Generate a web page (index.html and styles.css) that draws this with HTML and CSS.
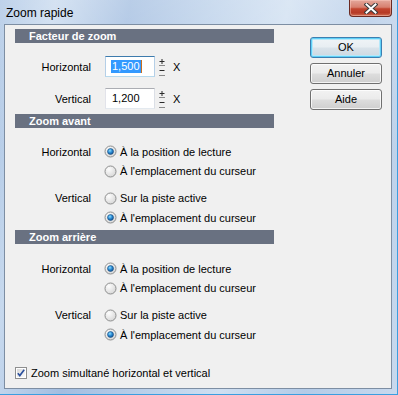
FILE: index.html
```
<!DOCTYPE html>
<html>
<head>
<meta charset="utf-8">
<link rel="stylesheet" href="styles.css">
</head>
<body>
<div class="window">
  <div class="titlebar">
    <span class="title">Zoom rapide</span>
    <div class="close">
      <svg width="14" height="11" viewBox="0 0 14 11">
        <path d="M2.5 1.5 L11.5 9.5 M11.5 1.5 L2.5 9.5" stroke="#3a3a3a" stroke-width="4" stroke-linecap="square"/>
        <path d="M2.5 1.5 L11.5 9.5 M11.5 1.5 L2.5 9.5" stroke="#ffffff" stroke-width="2" stroke-linecap="square"/>
      </svg>
    </div>
  </div>
  <div class="client">
    <div class="main">
      <div class="left">
        <div class="bar">Facteur de zoom</div>
        <div class="factor">
          <div class="lbl">Horizontal</div>
          <div class="ctrl">
            <div class="input focus"><span class="sel">1,500</span><span class="caret"></span></div>
            <svg class="spin" width="8" height="21" viewBox="0 0 8 21">
              <path d="M1.5 5.5 H6.5 M4 3 V8" stroke="#2a2a2a" stroke-width="1"/>
              <path d="M1 9.5 H7" stroke="#8a8a8a" stroke-width="1"/>
              <path d="M1.5 14.5 H6.5" stroke="#2a2a2a" stroke-width="1"/>
              <path d="M1 19.5 H7" stroke="#8a8a8a" stroke-width="1"/>
            </svg>
            <span class="x">X</span>
          </div>
          <div class="lbl">Vertical</div>
          <div class="ctrl">
            <div class="input"><span class="val">1,200</span></div>
            <svg class="spin" width="8" height="21" viewBox="0 0 8 21">
              <path d="M1.5 5.5 H6.5 M4 3 V8" stroke="#2a2a2a" stroke-width="1"/>
              <path d="M1 9.5 H7" stroke="#8a8a8a" stroke-width="1"/>
              <path d="M1.5 14.5 H6.5" stroke="#2a2a2a" stroke-width="1"/>
              <path d="M1 19.5 H7" stroke="#8a8a8a" stroke-width="1"/>
            </svg>
            <span class="x">X</span>
          </div>
        </div>

        <div class="bar">Zoom avant</div>
        <div class="radios first">
          <div class="group">
            <div class="lbl">Horizontal</div>
            <div class="opt"><svg class="radio" width="13" height="13" viewBox="0 0 13 13"><use href="#r-on"/></svg><span>À la position de lecture</span></div>
            <div class="opt col2"><svg class="radio" width="13" height="13" viewBox="0 0 13 13"><use href="#r-off"/></svg><span>À l'emplacement du curseur</span></div>
          </div>
          <div class="group">
            <div class="lbl">Vertical</div>
            <div class="opt"><svg class="radio" width="13" height="13" viewBox="0 0 13 13"><use href="#r-off"/></svg><span>Sur la piste active</span></div>
            <div class="opt col2"><svg class="radio" width="13" height="13" viewBox="0 0 13 13"><use href="#r-on"/></svg><span>À l'emplacement du curseur</span></div>
          </div>
        </div>

        <div class="bar">Zoom arrière</div>
        <div class="radios second">
          <div class="group">
            <div class="lbl">Horizontal</div>
            <div class="opt"><svg class="radio" width="13" height="13" viewBox="0 0 13 13"><use href="#r-on"/></svg><span>À la position de lecture</span></div>
            <div class="opt col2"><svg class="radio" width="13" height="13" viewBox="0 0 13 13"><use href="#r-off"/></svg><span>À l'emplacement du curseur</span></div>
          </div>
          <div class="group">
            <div class="lbl">Vertical</div>
            <div class="opt"><svg class="radio" width="13" height="13" viewBox="0 0 13 13"><use href="#r-off"/></svg><span>Sur la piste active</span></div>
            <div class="opt col2"><svg class="radio" width="13" height="13" viewBox="0 0 13 13"><use href="#r-on"/></svg><span>À l'emplacement du curseur</span></div>
          </div>
        </div>
      </div>
      <div class="buttons">
        <div class="btn default">OK</div>
        <div class="btn">Annuler</div>
        <div class="btn">Aide</div>
      </div>
    </div>
    <div class="check">
      <svg width="12" height="12" viewBox="0 0 12 12">
        <defs>
          <linearGradient id="cbg" x1="0" y1="0" x2="1" y2="1">
            <stop offset="0" stop-color="#d8d8d8"/>
            <stop offset="1" stop-color="#fbfbfb"/>
          </linearGradient>
        </defs>
        <rect x="0.5" y="0.5" width="11" height="11" fill="#ffffff" stroke="#8e8f8f"/>
        <rect x="2" y="2" width="8" height="8" fill="url(#cbg)"/>
        <path d="M2.8 6.2 L4.8 8.6 L9.2 2.8" fill="none" stroke="#2a4f9c" stroke-width="1.6"/>
      </svg>
      <span>Zoom simultané horizontal et vertical</span>
    </div>
  </div>
</div>

<svg width="0" height="0" class="defs">
  <defs>
    <radialGradient id="rbg" cx="0.35" cy="0.3" r="0.8">
      <stop offset="0" stop-color="#fdfdfd"/>
      <stop offset="1" stop-color="#d4d4d4"/>
    </radialGradient>
    <radialGradient id="rdot" cx="0.4" cy="0.35" r="0.7">
      <stop offset="0" stop-color="#8fe0ff"/>
      <stop offset="0.5" stop-color="#2a8ad4"/>
      <stop offset="1" stop-color="#0c4a8a"/>
    </radialGradient>
    <g id="r-off">
      <circle cx="6.5" cy="6.5" r="5.5" fill="url(#rbg)" stroke="#8e8f8f"/>
    </g>
    <g id="r-on">
      <circle cx="6.5" cy="6.5" r="5.5" fill="url(#rbg)" stroke="#8e8f8f"/>
      <circle cx="6.5" cy="6.5" r="3" fill="url(#rdot)" stroke="#1b4f7f" stroke-width="0.6"/>
    </g>
  </defs>
</svg>
</body>
</html>
```
FILE: styles.css
```
html, body {
  margin: 0;
  padding: 0;
}
body {
  width: 398px;
  height: 395px;
  overflow: hidden;
  font-family: "Liberation Sans", Arial, sans-serif;
  font-size: 11px;
  color: #000;
}
.defs {
  position: absolute;
  width: 0;
  height: 0;
}
.window {
  width: 398px;
  height: 395px;
  box-sizing: border-box;
  display: flex;
  flex-direction: column;
  background:
    linear-gradient(180deg, rgba(255,255,255,0.25) 0%, rgba(255,255,255,0) 40%),
    linear-gradient(100deg, #a9c3e3 0%, #c7d9ee 12%, #a2bde0 28%, #b9cfe9 45%, #cfdff1 62%, #b4cbe7 80%, #c8d9ee 100%);
  border-right: 1px solid #3b9ee0;
  border-bottom: 1px solid #3b9ee0;
}
.titlebar {
  height: 24px;
  flex: none;
  display: flex;
  align-items: flex-start;
  padding-left: 6px;
  padding-right: 5px;
}
.title {
  font-size: 12px;
  line-height: 14px;
  padding-top: 6px;
  color: #000;
}
.close {
  margin-left: auto;
  width: 43px;
  height: 17px;
  box-sizing: border-box;
  border: 1px solid #6b2a22;
  border-top: none;
  border-radius: 0 0 4px 4px;
  background: linear-gradient(180deg, #e4a89c 0%, #d7806f 45%, #c2452f 55%, #b63a26 80%, #cf6e52 100%);
  box-shadow: inset 0 0 0 1px rgba(255,210,200,0.45);
  display: flex;
  align-items: center;
  justify-content: center;
}
.client {
  flex: 1;
  margin: 0 5px 5px 4px;
  border: 1px solid #7d8ea3;
  background: #f0f0f0;
  padding: 4px 0 0 10px;
  display: flex;
  flex-direction: column;
}
.main {
  display: flex;
}
.left {
  width: 259px;
}
.bar {
  height: 14px;
  background: #697181;
  color: #fff;
  font-weight: bold;
  font-size: 11px;
  line-height: 14px;
  padding-left: 14px;
}
.factor {
  display: grid;
  grid-template-columns: 76px auto;
  grid-auto-rows: 21px;
  column-gap: 14px;
  row-gap: 11px;
  padding: 13px 0 5px;
  align-items: center;
}
.lbl {
  text-align: right;
}
.ctrl {
  display: flex;
  align-items: center;
}
.input {
  box-sizing: border-box;
  width: 50px;
  height: 21px;
  background: #fff;
  border: 1px solid #abadb3;
  border-top-color: #abadb3;
  border-left-color: #e2e3ea;
  border-right-color: #dbdfe6;
  border-bottom-color: #e3e9ef;
  padding-left: 5px;
  display: flex;
  align-items: center;
}
.input.focus {
  border-color: #7eb4ea;
  border-top-color: #3d7bad;
  border-left-color: #b5cfe7;
  border-right-color: #b5cfe7;
  border-bottom-color: #b7d9ed;
}
.sel {
  background: #3399ff;
  color: #fff;
  line-height: 13px;
  padding: 0 1px;
}
.caret {
  width: 1px;
  height: 13px;
  background: #c86f20;
}
.val {
  padding-left: 1px;
  line-height: 13px;
}
.spin {
  margin-left: 3px;
  display: block;
}
.x {
  margin-left: 7px;
}
.radios.first {
  padding: 14px 0 2.5px;
}
.radios.second {
  padding: 15px 0 0;
}
.group {
  display: grid;
  grid-template-columns: 76px auto;
  grid-auto-rows: 19.5px;
  column-gap: 13px;
  align-items: center;
}
.group + .group {
  margin-top: 7.5px;
}
.opt {
  display: flex;
  align-items: center;
  gap: 3px;
  white-space: nowrap;
}
.opt.col2 {
  grid-column: 2;
}
.radio {
  display: block;
  flex: none;
}
.buttons {
  margin-left: 36px;
  padding-top: 8px;
  display: flex;
  flex-direction: column;
  gap: 5px;
}
.btn {
  box-sizing: border-box;
  width: 72px;
  height: 21px;
  border: 1px solid #707070;
  border-radius: 3px;
  background: linear-gradient(180deg, #f2f2f2 0%, #ebebeb 48%, #dddddd 52%, #cfcfcf 100%);
  box-shadow: inset 0 0 0 1px rgba(255,255,255,0.75);
  display: flex;
  align-items: center;
  justify-content: center;
  line-height: 13px;
}
.btn.default {
  border-color: #3c7fb1;
  background: linear-gradient(180deg, #f0f4f7 0%, #e8eef2 48%, #dae3ea 52%, #cdd8e1 100%);
  box-shadow: inset 0 0 0 1px #5fd0f7, inset 0 0 0 2px #b6e8fa;
}
.check {
  margin-top: 21px;
  height: 15px;
  display: flex;
  align-items: center;
  gap: 4px;
}
.check svg {
  display: block;
  flex: none;
}
```
